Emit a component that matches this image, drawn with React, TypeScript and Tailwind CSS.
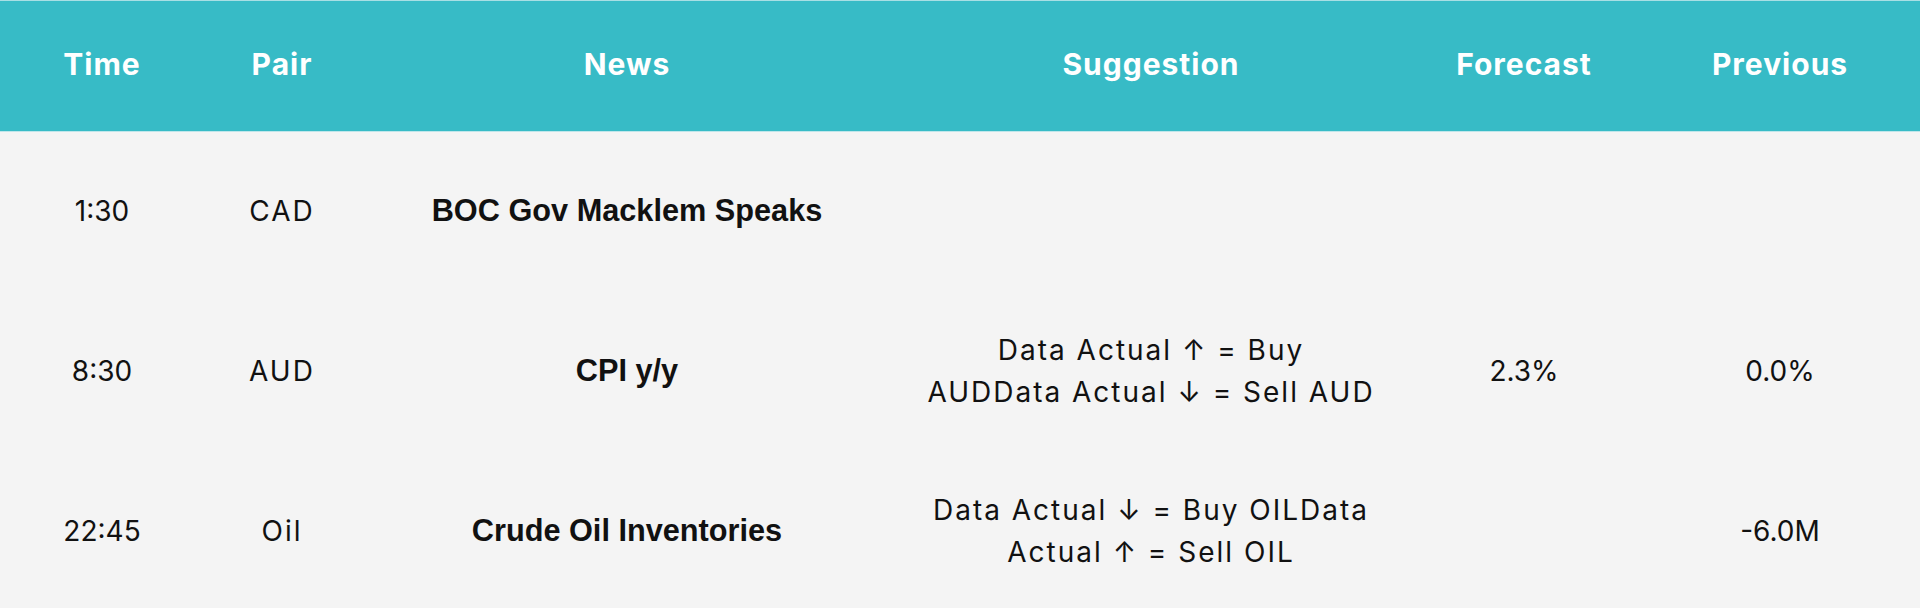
import React from "react";

type Row = {
  time: string;
  pair: string;
  news: string;
  suggestion: string[];
  forecast: string;
  previous: string;
};

const rows: Row[] = [
  { time: "1:30", pair: "CAD", news: "BOC Gov Macklem Speaks", suggestion: [], forecast: "", previous: "" },
  {
    time: "8:30",
    pair: "AUD",
    news: "CPI y/y",
    suggestion: ["Data Actual ↑ = Buy", "AUDData Actual ↓ = Sell AUD"],
    forecast: "2.3%",
    previous: "0.0%",
  },
  {
    time: "22:45",
    pair: "Oil",
    news: "Crude Oil Inventories",
    suggestion: ["Data Actual ↓ = Buy OILData", "Actual ↑ = Sell OIL"],
    forecast: "",
    previous: "-6.0M",
  },
];

const cols = "grid grid-cols-[204px_156px_534px_514px_232px_280px]";
const headers = ["Time", "Pair", "News", "Suggestion", "Forecast", "Previous"];

export default function App() {
  return (
    <div className="w-[1920px] h-[608px] overflow-hidden bg-[#f4f4f4] text-[#111] font-['Inter',sans-serif]">
      {/* header */}
      <div className={`${cols} h-[132px] bg-[#37bbc6] border-t border-b border-t-[#a9dfe4] border-b-[#bfe6ea]`}>
        {headers.map((h) => (
          <div
            key={h}
            className="flex items-center justify-center pb-[4px] text-white text-[30px] font-bold tracking-[1px]"
          >
            {h}
          </div>
        ))}
      </div>

      {rows.map((r) => (
        <div key={r.time} className={`${cols} h-[160px] pb-[3px] text-[28px] leading-[42px]`}>
          <div className="flex items-center justify-center">{r.time}</div>
          <div className="flex items-center justify-center tracking-[2px]">{r.pair}</div>
          <div className="flex items-center justify-center font-['Liberation_Sans',Arial,sans-serif] font-bold text-[30.7px]">
            {r.news}
          </div>
          <div className="flex flex-col items-center justify-center text-center tracking-[2px]">
            {r.suggestion.map((s) => (
              <div key={s}>{s}</div>
            ))}
          </div>
          <div className="flex items-center justify-center">{r.forecast}</div>
          <div className="flex items-center justify-center">{r.previous}</div>
        </div>
      ))}
    </div>
  );
}
